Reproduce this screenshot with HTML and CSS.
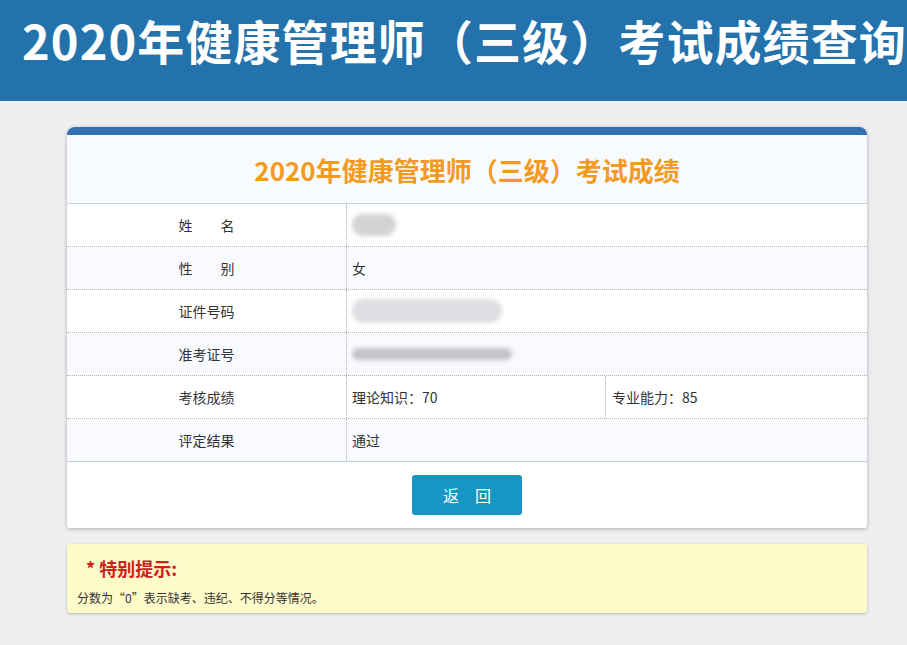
FILE: index.html
```html
<!DOCTYPE html>
<html lang="zh-CN">
<head>
<meta charset="utf-8">
<title>2020年健康管理师（三级）考试成绩查询</title>
<link rel="stylesheet" href="styles.css">
</head>
<body>
<header class="banner">
  <h1 class="banner-title">2020年健康管理师（三级）考试成绩查询</h1>
</header>
<main class="content">
  <section class="card">
    <h2 class="card-title">2020年健康管理师（三级）考试成绩</h2>
    <div class="rows">
      <div class="row">
        <div class="label">姓　　名</div>
        <div class="value"><span class="blur blur-name"></span></div>
      </div>
      <div class="row alt">
        <div class="label">性　　别</div>
        <div class="value">女</div>
      </div>
      <div class="row">
        <div class="label">证件号码</div>
        <div class="value"><span class="blur blur-id"></span></div>
      </div>
      <div class="row alt">
        <div class="label">准考证号</div>
        <div class="value"><span class="blur blur-no"></span></div>
      </div>
      <div class="row three">
        <div class="label">考核成绩</div>
        <div class="value">理论知识：70</div>
        <div class="value sub">专业能力：85</div>
      </div>
      <div class="row alt last">
        <div class="label">评定结果</div>
        <div class="value">通过</div>
      </div>
    </div>
    <div class="actions">
      <button class="btn" type="button">返　回</button>
    </div>
  </section>
  <section class="notice">
    <div class="notice-title">* 特别提示:</div>
    <p class="notice-text">分数为“0”表示缺考、违纪、不得分等情况。</p>
  </section>
</main>
</body>
</html>
```

FILE: styles.css
```css
* { box-sizing: border-box; }
html, body { margin: 0; padding: 0; }
body {
  background: #efeff1;
  font-family: "Microsoft YaHei", "Noto Sans CJK SC", "Noto Sans", sans-serif;
  color: #333;
  width: 907px;
  height: 645px;
  overflow: hidden;
}
.banner {
  height: 101px;
  background: #2472ab;
  overflow: hidden;
}
.banner-title {
  margin: 0;
  padding: 13px 0 0 22px;
  font-size: 47px;
  line-height: 54px;
  font-weight: 700;
  color: #fff;
  white-space: nowrap;
  letter-spacing: 1.1px;
}
.content {
  padding: 26px 0 0 67px;
}
.card {
  width: 800px;
  background: #fff;
  border-top: 8px solid #3170b1;
  border-radius: 8px 8px 3px 3px;
  box-shadow: 0 1px 4px rgba(0, 0, 0, 0.28);
}
.card-title {
  margin: 0;
  height: 69px;
  line-height: 70px;
  text-align: center;
  font-size: 26px;
  font-weight: 700;
  color: #f39a1f;
  background: #f8fbfe;
  border-bottom: 1px solid #c9d2da;
}
.row {
  display: grid;
  grid-template-columns: 280px 1fr;
  height: 43px;
  border-bottom: 1px dotted #b4b4b4;
  font-size: 14px;
  background: #fff;
}
.row.alt { background: #f8fafd; }
.row.three { grid-template-columns: 280px 258px 1fr; }
.row.last { border-bottom: 1px solid #c3cdd5; }
.label {
  display: flex;
  align-items: center;
  justify-content: center;
  border-right: 1px dotted #b4b4b4;
}
.value {
  display: flex;
  align-items: center;
  padding-left: 5px;
}
.value.sub { border-left: 1px dotted #b4b4b4; padding-left: 6px; }
.blur {
  display: block;
  background: #c9c9cc;
  filter: blur(2px);
  border-radius: 12px;
}
.blur-name { width: 44px; height: 22px; background: #d3d3d6; }
.blur-id { width: 150px; height: 24px; background: #dedee2; }
.blur-no { width: 160px; height: 12px; background: #c4c4c8; border-radius: 6px; }
.actions {
  display: flex;
  justify-content: center;
  padding: 13px 0 13px;
}
.btn {
  width: 110px;
  height: 40px;
  border: 0;
  border-radius: 3px;
  background: #1896c3;
  color: #fff;
  font-family: inherit;
  font-size: 16px;
  padding: 0;
}
.notice {
  width: 800px;
  margin-top: 16px;
  height: 69px;
  background: #fefbcb;
  border-radius: 3px;
  box-shadow: 0 1px 3px rgba(0, 0, 0, 0.25);
  padding: 12px 0 0 10px;
}
.notice-title {
  padding-left: 9px;
  font-size: 18px;
  line-height: 24px;
  font-weight: 700;
  color: #d0201d;
}
.notice-text {
  margin: 10px 0 0;
  font-size: 12px;
  line-height: 16px;
  color: #333;
}
```
